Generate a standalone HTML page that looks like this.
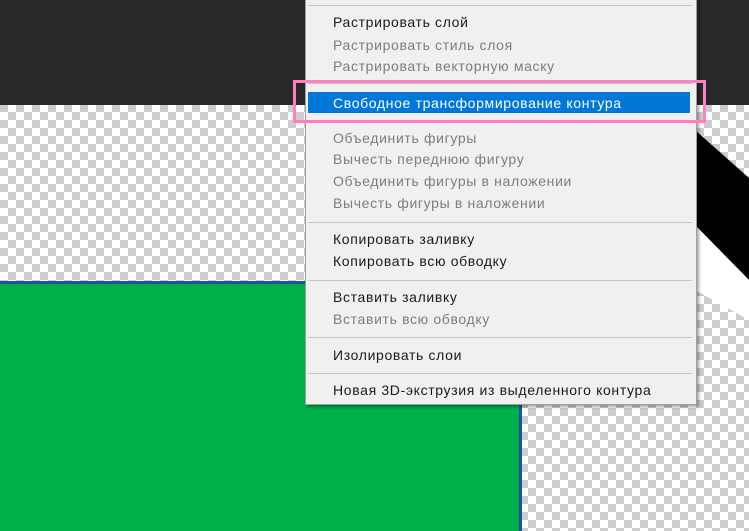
<!DOCTYPE html>
<html><head><meta charset="utf-8"><style>
body{margin:0;width:749px;height:531px;overflow:hidden;position:relative;background-color:#fff;
background-image:linear-gradient(45deg,#ccc 25%,transparent 25%,transparent 75%,#ccc 75%),linear-gradient(45deg,#ccc 25%,transparent 25%,transparent 75%,#ccc 75%);
background-size:16px 16px;background-position:0 0,8px 8px;font-family:"Liberation Sans","DejaVu Sans",sans-serif}
.a{position:absolute}
.menu{left:305px;top:-2px;width:390px;height:405px;background:#f0f0f0;border:1px solid #a0a0a0;box-shadow:2px 2px 3px rgba(0,0,0,.35)}
.t{position:absolute;left:333px;font-size:14px;letter-spacing:.65px;color:#1a1a1a;line-height:16px;white-space:nowrap}
.g{color:#7d7d7d}
.s{position:absolute;left:308px;width:384px;height:1px;background:#c6c6c6}
</style></head><body>
<div class="a" style="left:0;top:0;width:749px;height:105px;background:#282828"></div>
<svg class="a" style="left:0;top:0" width="749" height="531">
<polygon points="695,130 749,178 749,280 695,225" fill="#000"/>
<polygon points="695,225 749,280 749,320 695,290" fill="#fff"/>
</svg>
<div class="a" style="left:0;top:281px;width:522px;height:250px;background:#2050a0"></div>
<div class="a" style="left:0;top:284px;width:519px;height:247px;background:#00b14a"></div>
<div class="a menu"></div>
<div class="s" style="top:5px"></div>
<div class="t" style="top:14px">Растрировать слой</div>
<div class="t g" style="top:37px">Растрировать стиль слоя</div>
<div class="t g" style="top:58px">Растрировать векторную маску</div>
<div class="s" style="top:83px"></div>
<div class="a" style="left:308px;top:92px;width:382px;height:21px;background:#0078d7"></div>
<div class="t" style="top:95px;color:#fff">Свободное трансформирование контура</div>
<div class="a" style="left:293px;top:80px;width:407px;height:37px;border:3px solid #ff7fbf"></div>
<div class="t g" style="top:130px">Объединить фигуры</div>
<div class="t g" style="top:151px">Вычесть переднюю фигуру</div>
<div class="t g" style="top:173px">Объединить фигуры в наложении</div>
<div class="t g" style="top:195px">Вычесть фигуры в наложении</div>
<div class="s" style="top:222px"></div>
<div class="t" style="top:231px">Копировать заливку</div>
<div class="t" style="top:253px">Копировать всю обводку</div>
<div class="s" style="top:280px"></div>
<div class="t" style="top:289px">Вставить заливку</div>
<div class="t g" style="top:311px">Вставить всю обводку</div>
<div class="s" style="top:337px"></div>
<div class="t" style="top:347px">Изолировать слои</div>
<div class="s" style="top:373px"></div>
<div class="t" style="top:382px">Новая 3D-экструзия из выделенного контура</div>
</body></html>
